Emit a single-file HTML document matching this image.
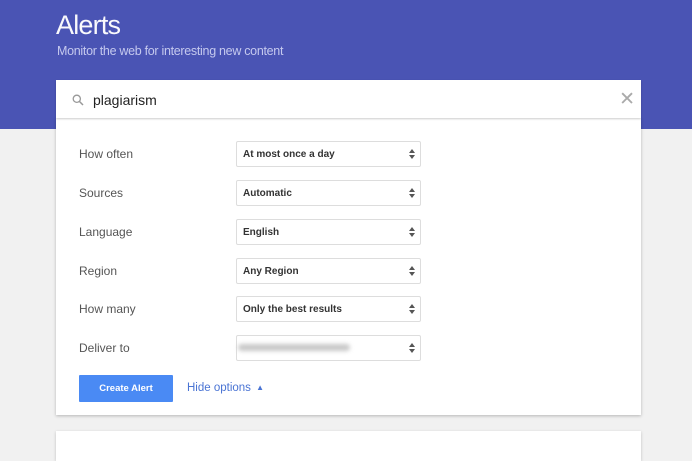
<!DOCTYPE html>
<html><head><meta charset="utf-8"><style>
*{box-sizing:border-box;margin:0;padding:0}
body{width:692px;height:449px;background:#f1f1f1;font-family:"Liberation Sans",Arial,sans-serif;position:relative;overflow:hidden}
.hdr{position:absolute;left:0;top:0;width:692px;height:129px;background:#4a54b4}
.t1{position:absolute;left:56px;top:10px;color:#fff;font-size:27px;font-weight:normal;letter-spacing:-0.8px;opacity:.97}
.t2{position:absolute;left:57px;top:44px;color:#c5c9ee;font-size:12.5px;letter-spacing:-0.3px}
.search{position:absolute;left:56px;top:80px;width:585px;height:38px;background:#fff;box-shadow:0 1px 2px rgba(0,0,0,.2)}
.search .q{position:absolute;left:37px;top:12px;font-size:14px;color:#222}
.search .x{position:absolute;right:6px;top:8px;font-size:19px;color:#aaa}
.card{position:absolute;left:56px;top:118px;width:585px;height:297px;background:#fff;box-shadow:0 1px 3px rgba(0,0,0,.25)}
.card2{position:absolute;left:56px;top:431px;width:585px;height:30px;background:#fff;box-shadow:0 1px 3px rgba(0,0,0,.2)}
.lbl{position:absolute;left:79px;font-size:12px;color:#555}
.sel{position:absolute;left:236px;width:185px;height:26px;border:1px solid #ddd;border-radius:2px;background:#fff;font-size:10px;font-weight:bold;color:#333;padding:7px 0 0 6px}
.sel:after{content:"";position:absolute;right:5px;top:7px;width:0;height:0;border-left:3px solid transparent;border-right:3px solid transparent;border-bottom:4px solid #555}
.sel:before{content:"";position:absolute;right:5px;top:13px;width:0;height:0;border-left:3px solid transparent;border-right:3px solid transparent;border-top:4px solid #555}
.btn{position:absolute;left:79px;top:375px;width:94px;height:27px;background:#4a8af4;color:#fff;font-size:9.5px;font-weight:bold;text-align:center;line-height:27px;border-radius:1px}
.hide{position:absolute;left:187px;top:382px;color:#4a74d4;font-size:11.5px}
.blur{position:absolute;left:238px;top:344px;width:112px;height:7px;background:#c8c8c8;border-radius:4px;filter:blur(2px)}
</style></head><body>
<div class="hdr"><div class="t1">Alerts</div><div class="t2">Monitor the web for interesting new content</div></div>
<div class="card"></div>
<div class="card2"></div>
<div class="search">
<svg style="position:absolute;left:16px;top:14px" width="12" height="12" viewBox="0 0 12 12"><circle cx="4.8" cy="4.8" r="3.6" fill="none" stroke="#999" stroke-width="1.3"/><line x1="7.5" y1="7.5" x2="11" y2="11" stroke="#999" stroke-width="1.5"/></svg>
<div class="q">plagiarism</div><div class="x">✕</div></div>
<div class="lbl" style="top:147px">How often</div><div class="sel" style="top:141px">At most once a day</div>
<div class="lbl" style="top:186px">Sources</div><div class="sel" style="top:180px">Automatic</div>
<div class="lbl" style="top:225px">Language</div><div class="sel" style="top:219px">English</div>
<div class="lbl" style="top:264px">Region</div><div class="sel" style="top:258px">Any Region</div>
<div class="lbl" style="top:302px">How many</div><div class="sel" style="top:296px">Only the best results</div>
<div class="lbl" style="top:341px">Deliver to</div><div class="sel" style="top:335px"></div>
<div class="blur"></div>
<div class="btn">Create Alert</div>
<div class="hide">Hide options <span style="font-size:8px;position:relative;top:-1px;margin-left:2px">&#9650;</span></div>
</body></html>
